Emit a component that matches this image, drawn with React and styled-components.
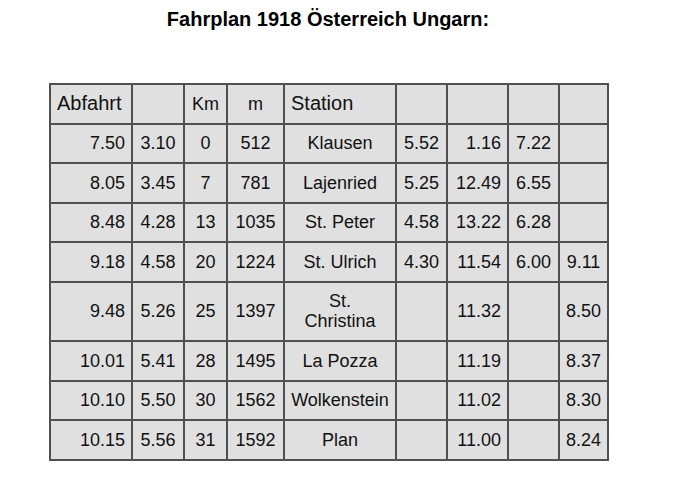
import React from 'react';
import styled, { createGlobalStyle } from 'styled-components';

const GlobalStyle = createGlobalStyle`
    body {
        margin: 0;
        background: #fff;
        font-family: "Liberation Sans", Arial, sans-serif;
        color: #111;
    }
`;

const columns = [82, 52, 43, 57, 112, 51, 61, 51, 49];

// alignment per column for the body rows
const aligns = ['right', 'center', 'center', 'center', 'center', 'center', 'right', 'center', 'center'];

const rows = [
    ['7.50', '3.10', '0', '512', 'Klausen', '5.52', '1.16', '7.22', ''],
    ['8.05', '3.45', '7', '781', 'Lajenried', '5.25', '12.49', '6.55', ''],
    ['8.48', '4.28', '13', '1035', 'St. Peter', '4.58', '13.22', '6.28', ''],
    ['9.18', '4.58', '20', '1224', 'St. Ulrich', '4.30', '11.54', '6.00', '9.11'],
    ['9.48', '5.26', '25', '1397', 'St. Christina', '', '11.32', '', '8.50'],
    ['10.01', '5.41', '28', '1495', 'La Pozza', '', '11.19', '', '8.37'],
    ['10.10', '5.50', '30', '1562', 'Wolkenstein', '', '11.02', '', '8.30'],
    ['10.15', '5.56', '31', '1592', 'Plan', '', '11.00', '', '8.24'],
];

export default function App() {
    return (
        <Page>
            <GlobalStyle />
            <Title>Fahrplan 1918 Österreich Ungarn:</Title>
            <Timetable>
                <colgroup>
                    {columns.map((w, i) => (
                        <col key={i} style={{ width: w }} />
                    ))}
                </colgroup>
                <tbody>
                    <Row>
                        <Cell $align="left" $big>Abfahrt</Cell>
                        <Cell />
                        <Cell>Km</Cell>
                        <Cell>m</Cell>
                        <Cell $align="left" $big>Station</Cell>
                        <Cell />
                        <Cell />
                        <Cell />
                        <Cell />
                    </Row>
                    {rows.map((row, r) => (
                        <Row key={r}>
                            {row.map((value, c) => (
                                <Cell key={c} $align={aligns[c]}>{value}</Cell>
                            ))}
                        </Row>
                    ))}
                </tbody>
            </Timetable>
        </Page>
    );
}

const Page = styled.div`
    width: 558px;
    padding: 8px 0 0 49px;
`;

const Title = styled.h1`
    margin: 0 0 52px;
    font-size: 20px;
    line-height: 23px;
    font-weight: bold;
    text-align: center;
    color: #000;
`;

const Timetable = styled.table`
    width: 558px;
    table-layout: fixed;
    border-collapse: collapse;
    border: 2px solid #505050;
`;

const Row = styled.tr`
    height: 39.6px;
`;

const Cell = styled.td`
    background: #e0e0e0;
    border: 2px solid #505050;
    padding: 8px 6px;
    font-size: ${p => (p.$big ? '20px' : '18px')};
    line-height: ${p => (p.$big ? '21px' : '20.5px')};
    text-align: ${p => p.$align || 'center'};
    vertical-align: middle;
`;
